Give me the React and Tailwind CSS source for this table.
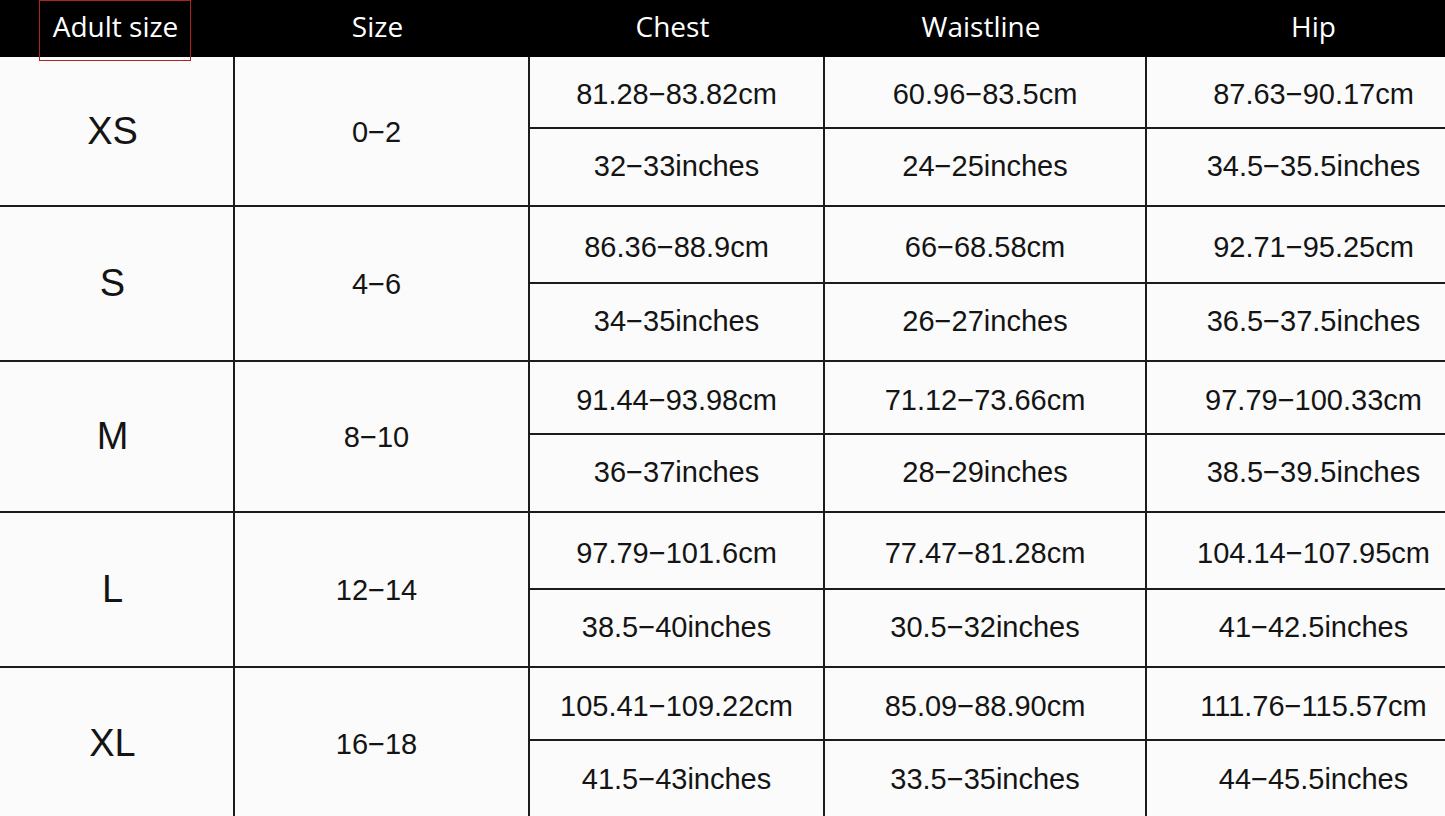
import React from 'react';

const sizes = [
  {
    label: 'XS',
    size: '0−2',
    rows: [
      ['81.28−83.82cm', '60.96−83.5cm', '87.63−90.17cm'],
      ['32−33inches', '24−25inches', '34.5−35.5inches'],
    ],
  },
  {
    label: 'S',
    size: '4−6',
    rows: [
      ['86.36−88.9cm', '66−68.58cm', '92.71−95.25cm'],
      ['34−35inches', '26−27inches', '36.5−37.5inches'],
    ],
  },
  {
    label: 'M',
    size: '8−10',
    rows: [
      ['91.44−93.98cm', '71.12−73.66cm', '97.79−100.33cm'],
      ['36−37inches', '28−29inches', '38.5−39.5inches'],
    ],
  },
  {
    label: 'L',
    size: '12−14',
    rows: [
      ['97.79−101.6cm', '77.47−81.28cm', '104.14−107.95cm'],
      ['38.5−40inches', '30.5−32inches', '41−42.5inches'],
    ],
  },
  {
    label: 'XL',
    size: '16−18',
    rows: [
      ['105.41−109.22cm', '85.09−88.90cm', '111.76−115.57cm'],
      ['41.5−43inches', '33.5−35inches', '44−45.5inches'],
    ],
  },
];

const headers = ['Size', 'Chest', 'Waistline', 'Hip'];

const App = () => {
  return (
    <div className="w-[1445px] h-[816px] overflow-hidden bg-[#fbfbfb]">
      <div className="w-[1480px]">
        {/* Header */}
        <div className="flex h-[57px] bg-black text-white text-[28px] font-['Open_Sans',sans-serif] pb-[5px]">
          <div className="relative w-[235px] flex items-center justify-center">
            <span className="-ml-[4px]">Adult size</span>
            <div className="absolute left-[39px] top-0 w-[152px] h-[61px] border-[1.5px] border-[#b0231c]" />
          </div>
          <div className="w-[295px] flex items-center justify-center pr-[10px]">{headers[0]}</div>
          <div className="w-[295px] flex items-center justify-center pr-[10px]">{headers[1]}</div>
          <div className="w-[322px] flex items-center justify-center pr-[10px]">{headers[2]}</div>
          <div className="flex-1 flex items-center justify-center">{headers[3]}</div>
        </div>

        {/* Body */}
        <div className="grid grid-cols-[233px_293px_293px_320px_333px] grid-rows-[70px_76px_75px_76px_71px_76px_75px_76px_71px_78px] gap-[2px] bg-[#1c1c1c] text-[#141414] font-['Liberation_Sans',Arial,sans-serif]">
          {sizes.map((s) => (
            <React.Fragment key={s.label}>
              <div className="row-span-2 bg-[#fbfbfb] flex items-center justify-center text-[38px] pr-[8px]">
                {s.label}
              </div>
              <div className="row-span-2 bg-[#fbfbfb] flex items-center justify-center text-[29px] pt-[3px] pr-[10px]">
                {s.size}
              </div>
              {s.rows[0].map((v, i) => (
                <div key={`a${i}`} className="bg-[#fbfbfb] flex items-center justify-center text-[29px] pt-[6px]">
                  {v}
                </div>
              ))}
              {s.rows[1].map((v, i) => (
                <div key={`b${i}`} className="bg-[#fbfbfb] flex items-center justify-center text-[29px]">
                  {v}
                </div>
              ))}
            </React.Fragment>
          ))}
        </div>
      </div>
    </div>
  );
};

export default App;
